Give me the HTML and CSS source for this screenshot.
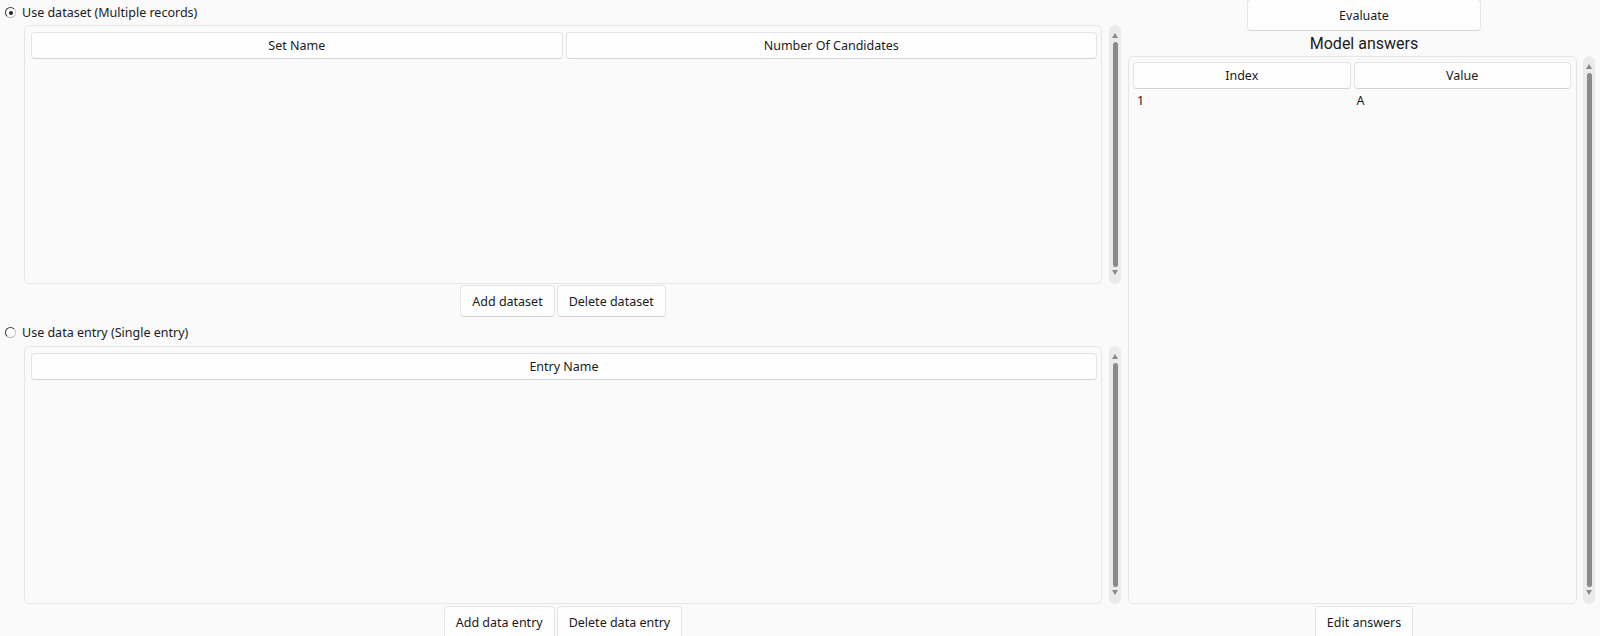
FILE: index.html
```html
<!DOCTYPE html>
<html>
<head>
<meta charset="utf-8">
<link rel="stylesheet" href="styles.css">
</head>
<body>
<div class="app">
  <div class="left">
    <label class="radio-row first">
      <span class="radio checked"></span>
      <span class="radio-label">Use dataset (Multiple records)</span>
    </label>
    <div class="table-area t1">
      <div class="frame">
        <div class="header">
          <div class="hcell">Set Name</div>
          <div class="hcell">Number Of Candidates</div>
        </div>
      </div>
      <div class="scroll">
        <span class="arrow up"></span>
        <span class="thumb"></span>
        <span class="arrow down"></span>
      </div>
    </div>
    <div class="btn-row">
      <button class="btn">Add dataset</button>
      <button class="btn">Delete dataset</button>
    </div>
    <label class="radio-row second">
      <span class="radio"></span>
      <span class="radio-label">Use data entry (Single entry)</span>
    </label>
    <div class="table-area t2">
      <div class="frame">
        <div class="header">
          <div class="hcell">Entry Name</div>
        </div>
      </div>
      <div class="scroll">
        <span class="arrow up"></span>
        <span class="thumb"></span>
        <span class="arrow down"></span>
      </div>
    </div>
    <div class="btn-row bottom">
      <button class="btn">Add data entry</button>
      <button class="btn">Delete data entry</button>
    </div>
  </div>
  <div class="right">
    <button class="btn evaluate">Evaluate</button>
    <div class="title">Model answers</div>
    <div class="table-area t3">
      <div class="frame rframe">
        <div class="header">
          <div class="hcell">Index</div>
          <div class="hcell">Value</div>
        </div>
        <div class="row">
          <div class="cell">1</div>
          <div class="cell">A</div>
        </div>
      </div>
      <div class="scroll">
        <span class="arrow up"></span>
        <span class="thumb"></span>
        <span class="arrow down"></span>
      </div>
    </div>
    <div class="btn-row bottom">
      <button class="btn">Edit answers</button>
    </div>
  </div>
</div>
</body>
</html>
```
FILE: styles.css
```css
* { box-sizing: border-box; }
html, body {
  margin: 0;
  padding: 0;
  background: #fafafa;
  width: 1600px;
  height: 636px;
  overflow: hidden;
  font-family: "Noto Sans", "Open Sans", sans-serif;
  font-size: 12.5px;
  color: #1b1b1b;
}
.app {
  display: flex;
  height: 636px;
  align-items: flex-start;
}
.left {
  width: 1128px;
  flex: none;
  display: flex;
  flex-direction: column;
}
.right {
  width: 472px;
  flex: none;
  display: flex;
  flex-direction: column;
  align-items: center;
}
.left > *, .right > * { flex-shrink: 0; }
.radio-row {
  display: flex;
  align-items: center;
  padding-left: 5px;
}
.radio-row.first { height: 25px; }
.radio-row.second { height: 29px; padding-top: 2px; }
.radio {
  width: 11px;
  height: 11px;
  border-radius: 50%;
  border: 1px solid #3a3a3a;
  border-right-color: #c8c8c8;
  border-bottom-color: #b0b0b0;
  background: #fff;
  position: relative;
  flex: none;
}
.radio.checked::after {
  content: "";
  position: absolute;
  left: 2.5px;
  top: 2.5px;
  width: 4px;
  height: 4px;
  border-radius: 50%;
  background: #222;
}
.radio-label {
  margin-left: 6px;
  line-height: 16px;
}
.table-area {
  display: flex;
  padding-left: 24px;
}
.t1 { height: 259px; }
.t2 { height: 258px; }
.t3 { height: 548px; padding-left: 0; align-self: stretch; }
.frame {
  width: 1078px;
  border: 1px solid #e6e6e6;
  border-radius: 5px;
  background: #fafafa;
  padding: 6px 4px 0 6px;
}
.rframe {
  width: 449px;
  padding: 5px 5px 0 4px;
}
.header {
  display: flex;
  gap: 3px;
}
.hcell {
  flex: 1;
  height: 27px;
  display: flex;
  align-items: center;
  justify-content: center;
  background: #fefefe;
  border: 1px solid #e4e4e4;
  border-bottom-color: #d3d3d3;
  border-radius: 4px;
  white-space: nowrap;
}
.row {
  display: flex;
  height: 22px;
  align-items: center;
}
.cell {
  flex: 1;
  padding-left: 4px;
}
.cell + .cell { padding-left: 5px; }
.scroll {
  width: 12px;
  margin-left: 7px;
  border-radius: 6px;
  background: #ebebeb;
  display: flex;
  flex-direction: column;
  align-items: center;
  padding: 8px 0 9px;
}
.t3 .scroll { margin-left: 6px; }
.arrow {
  width: 0;
  height: 0;
  border-left: 3.5px solid transparent;
  border-right: 3.5px solid transparent;
  flex: none;
}
.arrow.up { border-bottom: 5px solid #8a8a8a; margin-bottom: 4px; }
.arrow.down { border-top: 5px solid #8a8a8a; margin-top: 3px; }
.thumb {
  flex: 1;
  width: 5px;
  border-radius: 3px;
  background: #8a8a8a;
}
.btn-row {
  display: flex;
  justify-content: center;
  gap: 2px;
  width: 1102px;
  padding-left: 24px;
  margin-top: 1px;
  height: 32px;
}
.btn-row.bottom { margin-top: 2px; height: 40px; }
.right .btn-row { width: auto; padding-left: 0; }
.btn {
  font-family: inherit;
  font-size: 12.5px;
  color: #1b1b1b;
  background: #fefefe;
  border: 1px solid #e5e5e5;
  border-bottom-color: #d2d2d2;
  border-radius: 4px;
  padding: 0 11px;
  height: 32px;
  margin: 0;
}
.btn-row.bottom .btn { height: 40px; padding-bottom: 8px; }
.evaluate {
  width: 234px;
  margin-top: -1px;
}
.title {
  height: 25px;
  font-family: Roboto, "Liberation Sans", sans-serif;
  font-size: 16px;
  line-height: 25px;
  color: #1b1b1b;
}
```
